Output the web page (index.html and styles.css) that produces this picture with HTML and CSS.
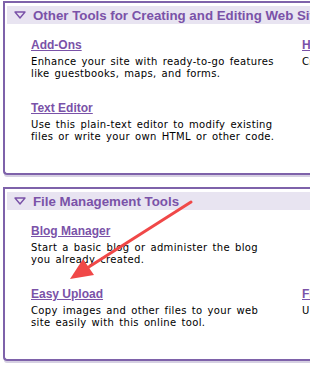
FILE: index.html
```html
<!DOCTYPE html>
<html lang="en">
<head>
    <meta charset="UTF-8">
    <title>Site Tools</title>
    <link rel="stylesheet" href="styles.css">
</head>
<body>
    <div class="page">
        <div class="panel">
            <div class="panel-head">
                <svg class="toggle" width="12" height="8" viewBox="0 0 12 8"><path d="M1 1 L11 1 L6 7 Z" fill="none" stroke="#7a52a8" stroke-width="1.4" stroke-linejoin="round"/></svg>
                <span>Other Tools for Creating and Editing Web Sites</span>
            </div>
            <div class="tools">
                <div class="tool">
                    <a href="#">Add-Ons</a>
                    <p>Enhance your site with ready-to-go features like guestbooks, maps, and forms.</p>
                </div>
                <div class="tool">
                    <a href="#">HTML Editor</a>
                    <p>Create and edit your pages directly in HTML.</p>
                </div>
                <div class="tool">
                    <a href="#">Text Editor</a>
                    <p>Use this plain-text editor to modify existing files or write your own HTML or other code.</p>
                </div>
            </div>
        </div>

        <div class="panel">
            <div class="panel-head">
                <svg class="toggle" width="12" height="8" viewBox="0 0 12 8"><path d="M1 1 L11 1 L6 7 Z" fill="none" stroke="#7a52a8" stroke-width="1.4" stroke-linejoin="round"/></svg>
                <span>File Management Tools</span>
            </div>
            <div class="tools">
                <div class="tool">
                    <a href="#">Blog Manager</a>
                    <p>Start a basic blog or administer the blog you already created.</p>
                </div>
                <div class="tool"></div>
                <div class="tool">
                    <a href="#">Easy Upload</a>
                    <p>Copy images and other files to your web site easily with this online tool.</p>
                </div>
                <div class="tool">
                    <a href="#">File Manager</a>
                    <p>Upload, move and delete folders and files.</p>
                </div>
            </div>
        </div>

        <!-- annotation arrow -->
        <svg class="arrow" width="310" height="372" viewBox="0 0 310 372">
            <line x1="191" y1="202" x2="84" y2="270" stroke="#f04848" stroke-width="3" stroke-linecap="round"/>
            <path d="M70 279 L83 259 L94 275 Z" fill="#f04848"/>
        </svg>
    </div>
</body>
</html>
```

FILE: styles.css
```css
:root {
    --purple: #7a52a8;
    --border: #7e62aa;
    --band: #e8e4f1;
    --shadow: #d6d0e2;
}

body {
    margin: 0;
    overflow: hidden;
    background: #ffffff;
    font-family: 'DejaVu Sans', Verdana, sans-serif;
}

.page {
    position: relative;
    width: 310px;
    height: 372px;
    overflow: hidden;
    padding-top: 1px;
    box-sizing: border-box;
}

.panel {
    width: 640px;
    margin-left: 3px;
    margin-bottom: 12px;
    padding: 3px 0 30px 2px;
    border: 2px solid var(--border);
    border-right: none;
    border-bottom-left-radius: 4px;
    box-shadow: 0 3px 0 -1px var(--shadow);
}

.panel-head {
    display: flex;
    align-items: center;
    height: 18px;
    padding-left: 7px;
    background: var(--band);
    color: var(--purple);
    font-family: 'Liberation Sans', Arial, sans-serif;
    font-weight: bold;
    font-size: 13.3px;
    white-space: nowrap;
}

.toggle {
    margin-right: 7px;
}

.tools {
    display: grid;
    grid-template-columns: 271px 271px;
    row-gap: 20px;
    padding: 13px 0 0 24px;
}

.tool a {
    display: block;
    color: var(--purple);
    font-family: 'Liberation Sans', Arial, sans-serif;
    font-weight: bold;
    font-size: 12px;
    line-height: 16px;
}

.tool p {
    margin: 3px 0 0;
    width: 250px;
    font-size: 10px;
    line-height: 12px;
    letter-spacing: 0.35px;
    word-spacing: 1.5px;
    color: #000000;
}

.arrow {
    position: absolute;
    top: 0;
    left: 0;
    pointer-events: none;
}
```
